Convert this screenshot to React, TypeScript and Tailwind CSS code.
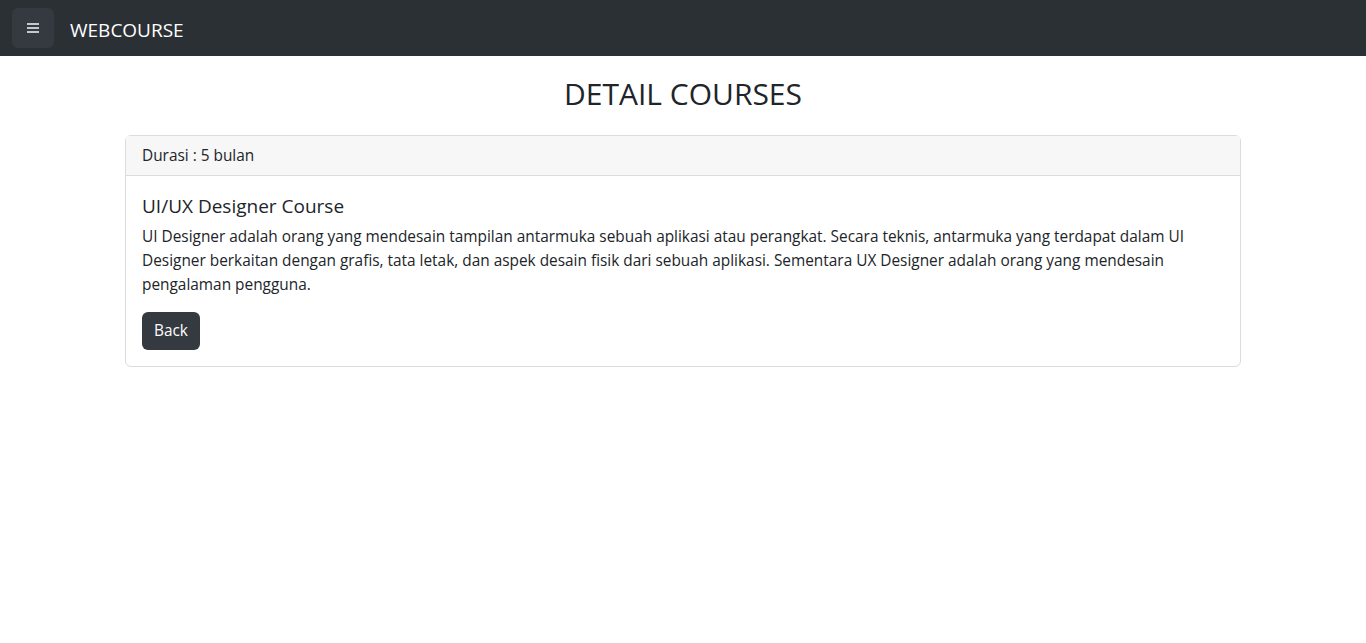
const font = { fontFamily: '"Open Sans", "Noto Sans", sans-serif' };

export default function App() {
  return (
    <div className="min-h-screen bg-white text-[#212529]" style={font}>
      <nav className="h-[56px] bg-[#2b3035] flex items-center px-3">
        <button className="w-[42px] h-[40px] rounded-md bg-[#343a40] flex items-center justify-center">
          <svg width="12" height="10" viewBox="0 0 12 10">
            <rect x="0" y="0" width="12" height="2" fill="#c4c8cc" />
            <rect x="0" y="4" width="12" height="2" fill="#c4c8cc" />
            <rect x="0" y="8" width="12" height="2" fill="#c4c8cc" />
          </svg>
        </button>
        <span className="ml-4 pt-1 text-white text-[19px]">WEBCOURSE</span>
      </nav>

      <div className="w-[1140px] mx-auto px-3">
        <h2 className="text-center text-[30px] leading-[38px] mt-[19px] mb-[22px]">DETAIL COURSES</h2>
        <div className="border border-[#dcdcdc] rounded-md">
          <div className="h-[40px] px-4 flex items-center bg-[#f7f7f7] border-b border-[#dcdcdc] text-[15.4px]">
            Durasi : 5 bulan
          </div>
          <div className="p-4">
            <h5 className="text-[19px] leading-[24px] pt-[2px] mb-[7px]">UI/UX Designer Course</h5>
            <p className="text-[15.4px] leading-[24px] mb-[15px]">
              UI Designer adalah orang yang mendesain tampilan antarmuka sebuah aplikasi atau perangkat. Secara teknis,
              antarmuka yang terdapat dalam UI Designer berkaitan dengan grafis, tata letak, dan aspek desain fisik dari
              sebuah aplikasi. Sementara UX Designer adalah orang yang mendesain pengalaman pengguna.
            </p>
            <button className="h-[38px] px-3 rounded-md bg-[#343a40] text-white text-[15.4px]">Back</button>
          </div>
        </div>
      </div>
    </div>
  );
}
